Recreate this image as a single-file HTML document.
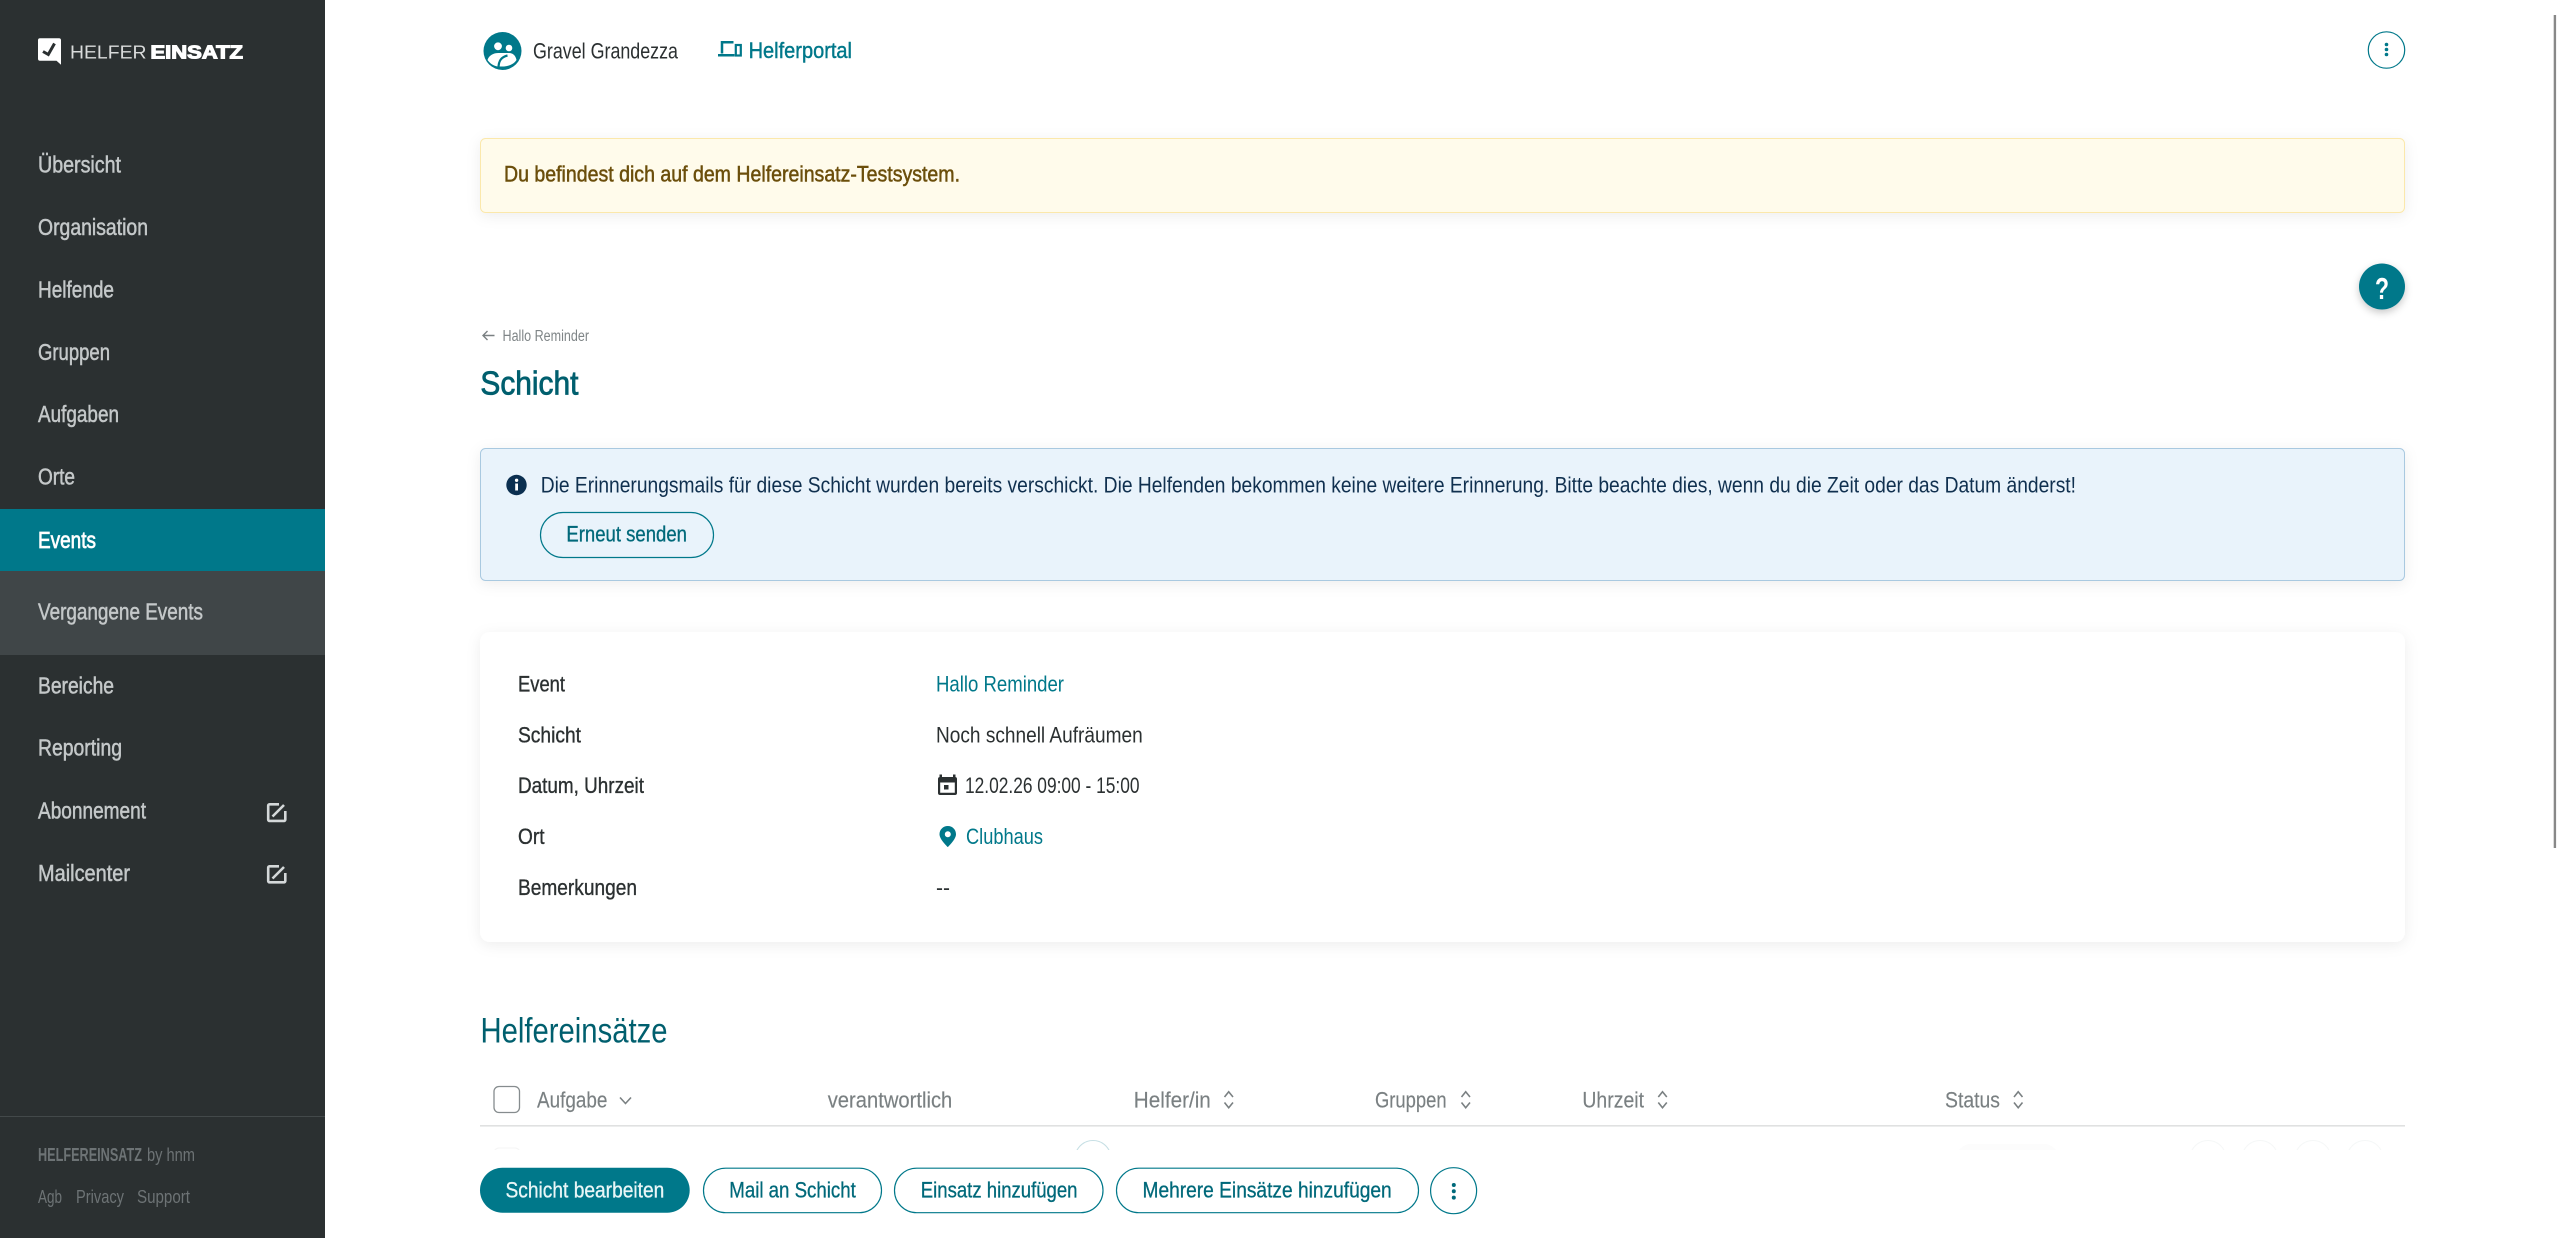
<!DOCTYPE html>
<html lang="de"><head><meta charset="utf-8"><title>Schicht</title>
<style>
html,body{margin:0;padding:0;background:#fff;width:2559px;height:1238px;overflow:hidden}
svg{display:block;position:absolute;left:0;top:0}
text{font-family:"Liberation Sans Narrow","Liberation Sans",sans-serif;font-size:22px;fill:#2b3031}
.n{font-size:23px;fill:#c4c8c9;stroke:#c4c8c9;stroke-width:.5px}
.t{fill:#00788a}
.h{fill:#7a8082;font-size:22px;stroke:#7a8082;stroke-width:.15px}
.b{fill:#00697a;font-size:22.5px;stroke:#00697a;stroke-width:.3px}
.f{fill:#6d7375;font-size:18.5px}
</style></head><body>
<svg width="2559" height="1238" viewBox="0 0 2559 1238" xmlns="http://www.w3.org/2000/svg">
<defs>
<filter id="s1" x="-5%" y="-30%" width="110%" height="170%"><feDropShadow dx="0" dy="3" stdDeviation="7" flood-color="#000" flood-opacity=".07"/></filter>
<filter id="s2" x="-30%" y="-30%" width="160%" height="170%"><feDropShadow dx="0" dy="3" stdDeviation="4" flood-color="#000" flood-opacity=".22"/></filter>
<clipPath id="fr"><rect x="480" y="1138" width="1925" height="12"/></clipPath>
</defs>

<!-- Sidebar -->
<rect x="0" y="0" width="325" height="1238" fill="#2b3031"/>
<rect x="0" y="509" width="325" height="62" fill="#00788a"/>
<rect x="0" y="571" width="325" height="84" fill="#404648"/>
<path d="M40 38.3H59a2 2 0 0 1 2 2V64.7L56.5 60.7H40a2 2 0 0 1-2-2V40.3a2 2 0 0 1 2-2Z" fill="#fff"/>
<path d="M43 51.5L48.3 54.5L54.5 43.5" fill="none" stroke="#2b3031" stroke-width="3"/>
<text x="70" y="58.3" textLength="76.5" lengthAdjust="spacingAndGlyphs" style="font-family:'Liberation Sans',sans-serif;font-size:18px;fill:#d9dbdb">HELFER</text>
<text x="150.5" y="58.3" textLength="92.5" lengthAdjust="spacingAndGlyphs" style="font-family:'Liberation Sans',sans-serif;font-size:18px;font-weight:700;fill:#fff;stroke:#fff;stroke-width:1.1px">EINSATZ</text>

<text class="n" x="38" y="172.7" textLength="83" lengthAdjust="spacingAndGlyphs">Übersicht</text>
<text class="n" x="38" y="235" textLength="110" lengthAdjust="spacingAndGlyphs">Organisation</text>
<text class="n" x="38" y="297.3" textLength="76" lengthAdjust="spacingAndGlyphs">Helfende</text>
<text class="n" x="38" y="360" textLength="72" lengthAdjust="spacingAndGlyphs">Gruppen</text>
<text class="n" x="38" y="422" textLength="81" lengthAdjust="spacingAndGlyphs">Aufgaben</text>
<text class="n" x="38" y="484.5" textLength="37" lengthAdjust="spacingAndGlyphs">Orte</text>
<text class="n" x="38" y="548" textLength="58" lengthAdjust="spacingAndGlyphs" style="fill:#fff;stroke:#fff;stroke-width:.7px">Events</text>
<text class="n" x="38" y="619.5" textLength="165" lengthAdjust="spacingAndGlyphs">Vergangene Events</text>
<text class="n" x="38" y="693.6" textLength="76" lengthAdjust="spacingAndGlyphs">Bereiche</text>
<text class="n" x="38" y="755.7" textLength="84" lengthAdjust="spacingAndGlyphs">Reporting</text>
<text class="n" x="38" y="818.3" textLength="108" lengthAdjust="spacingAndGlyphs">Abonnement</text>
<text class="n" x="38" y="880.8" textLength="92" lengthAdjust="spacingAndGlyphs">Mailcenter</text>
<g fill="none" stroke="#d4d8d9" stroke-width="2.6">
<path d="M279 804.3H269.5a1.3 1.3 0 0 0-1.3 1.3V819.6a1.3 1.3 0 0 0 1.3 1.3H284a1.3 1.3 0 0 0 1.3-1.3V811"/>
<path d="M272.5 816.5L284 805"/>
<path d="M279 866.3H269.5a1.3 1.3 0 0 0-1.3 1.3V881a1.3 1.3 0 0 0 1.3 1.3H284a1.3 1.3 0 0 0 1.3-1.3V873"/>
<path d="M272.5 878.5L284 867"/>
</g>
<rect x="0" y="1116" width="325" height="1" fill="#43494a"/>
<text class="f" x="38" y="1161.2" textLength="104" lengthAdjust="spacingAndGlyphs" style="font-weight:700">HELFEREINSATZ</text>
<text class="f" x="147" y="1161.2" textLength="48" lengthAdjust="spacingAndGlyphs">by hnm</text>
<text class="f" x="38" y="1203.2" textLength="24" lengthAdjust="spacingAndGlyphs">Agb</text>
<text class="f" x="76" y="1203.2" textLength="48" lengthAdjust="spacingAndGlyphs">Privacy</text>
<text class="f" x="137" y="1203.2" textLength="53" lengthAdjust="spacingAndGlyphs">Support</text>

<!-- Top bar -->
<circle cx="502.5" cy="51" r="19" fill="#00788a"/>
<circle cx="498" cy="46.3" r="3.9" fill="#fff"/>
<circle cx="509" cy="48" r="3.3" fill="#fff"/>
<path d="M487.5 60C489 55 494 52.8 499 53H509C513 53 515.5 55.5 516.5 60C514 64 509 66 504 66.5L498 66.5C493.5 66 490 63.5 487.5 60Z" fill="#fff"/>
<path d="M498.5 68C498.5 61 501 57 507.5 55.5" fill="none" stroke="#00788a" stroke-width="2.2"/>
<text x="533" y="58.3" textLength="145" lengthAdjust="spacingAndGlyphs" style="font-size:22.5px">Gravel Grandezza</text>
<path d="M722 53.5V42.2H733.5M718 55.2H734.5" fill="none" stroke="#00788a" stroke-width="2.5"/>
<rect x="735.8" y="45" width="5" height="10.5" fill="none" stroke="#00788a" stroke-width="2.2"/>
<text class="t" x="748.6" y="58" textLength="103.4" lengthAdjust="spacingAndGlyphs" style="font-size:22.5px;stroke:#00788a;stroke-width:.4px">Helferportal</text>
<circle cx="2386.5" cy="50" r="18.2" fill="#fff" stroke="#00788a" stroke-width="1.2"/>
<g fill="#00788a"><circle cx="2386.5" cy="44.5" r="1.8"/><circle cx="2386.5" cy="49.5" r="1.8"/><circle cx="2386.5" cy="54.5" r="1.8"/></g>

<!-- Warning -->
<rect x="480.5" y="138.5" width="1924" height="74" rx="5" fill="#fffbeb" stroke="#fbe8ab" filter="url(#s1)"/>
<text x="504" y="181.7" textLength="456" lengthAdjust="spacingAndGlyphs" style="font-size:22.5px;fill:#6b4e0b;stroke:#6b4e0b;stroke-width:.5px">Du befindest dich auf dem Helfereinsatz-Testsystem.</text>

<!-- Help -->
<circle cx="2382" cy="286.5" r="23" fill="#00788a" filter="url(#s2)"/>
<text x="2375" y="299" textLength="14" lengthAdjust="spacingAndGlyphs" style="font-family:'Liberation Sans',sans-serif;font-size:31px;font-weight:700;fill:#fff">?</text>

<!-- Breadcrumb -->
<path d="M494.5 335.5H483M487.5 331L483 335.5L487.5 340" fill="none" stroke="#7a8082" stroke-width="1.4"/>
<text x="502.5" y="341" textLength="86.5" lengthAdjust="spacingAndGlyphs" style="font-size:15.5px;fill:#7f8587">Hallo Reminder</text>
<text x="480.4" y="394.3" textLength="98" lengthAdjust="spacingAndGlyphs" style="font-size:33.5px;fill:#005f6e;stroke:#005f6e;stroke-width:.8px">Schicht</text>

<!-- Info -->
<rect x="480.5" y="448.5" width="1924" height="132" rx="5" fill="#e9f3fb" stroke="#a9c9e0" filter="url(#s1)"/>
<circle cx="516.5" cy="485" r="10.2" fill="#0b2f50"/>
<rect x="515.2" y="483.5" width="2.8" height="7" fill="#fff"/>
<circle cx="516.6" cy="480.3" r="1.7" fill="#fff"/>
<text x="540.7" y="492.7" textLength="1535.3" lengthAdjust="spacingAndGlyphs" style="font-size:22.5px;fill:#10304f">Die Erinnerungsmails für diese Schicht wurden bereits verschickt. Die Helfenden bekommen keine weitere Erinnerung. Bitte beachte dies, wenn du die Zeit oder das Datum änderst!</text>
<rect x="540.5" y="512.5" width="173" height="45" rx="22.5" fill="none" stroke="#00788a" stroke-width="1.2"/>
<text class="b" x="566.4" y="541.7" textLength="120.6" lengthAdjust="spacingAndGlyphs">Erneut senden</text>

<!-- Card -->
<rect x="480" y="632" width="1925" height="310" rx="10" fill="#fff" filter="url(#s1)"/>
<text x="518" y="691.7" textLength="47" lengthAdjust="spacingAndGlyphs" style="stroke:#2b3031;stroke-width:.35px">Event</text>
<text x="518" y="742.7" textLength="63" lengthAdjust="spacingAndGlyphs" style="stroke:#2b3031;stroke-width:.35px">Schicht</text>
<text x="518" y="793" textLength="126" lengthAdjust="spacingAndGlyphs" style="stroke:#2b3031;stroke-width:.35px">Datum, Uhrzeit</text>
<text x="518" y="844" textLength="26.5" lengthAdjust="spacingAndGlyphs" style="stroke:#2b3031;stroke-width:.35px">Ort</text>
<text x="518" y="895" textLength="119" lengthAdjust="spacingAndGlyphs" style="stroke:#2b3031;stroke-width:.35px">Bemerkungen</text>
<text class="t" x="936" y="691.7" textLength="128" lengthAdjust="spacingAndGlyphs">Hallo Reminder</text>
<text x="936" y="742.7" textLength="206.7" lengthAdjust="spacingAndGlyphs">Noch schnell Aufräumen</text>
<path d="M942 774.5V777H953V774.5H955.5V777H955A2 2 0 0 1 957 779V793A2 2 0 0 1 955 795H940A2 2 0 0 1 938 793V779A2 2 0 0 1 940 777H939.5V774.5ZM940.2 782.5V792.8H954.8V782.5Z" fill="#2b3031" fill-rule="evenodd"/>
<rect x="944" y="785" width="4.5" height="4.5" fill="#2b3031"/>
<text x="965" y="793" textLength="174.5" lengthAdjust="spacingAndGlyphs">12.02.26 09:00 - 15:00</text>
<path d="M947.8 826C943 826 939.5 829.8 939.5 834.2C939.5 839.5 947.8 847 947.8 847C947.8 847 956 839.5 956 834.2C956 829.8 952.6 826 947.8 826ZM947.8 837.2A3 3 0 1 1 947.8 831.2A3 3 0 1 1 947.8 837.2Z" fill="#00788a" fill-rule="evenodd"/>
<text class="t" x="966" y="844" textLength="77" lengthAdjust="spacingAndGlyphs">Clubhaus</text>
<text x="936" y="895" textLength="14" lengthAdjust="spacingAndGlyphs">--</text>

<!-- Section -->
<text x="480.5" y="1042.7" textLength="187" lengthAdjust="spacingAndGlyphs" style="font-size:35.5px;fill:#005f6e">Helfereinsätze</text>

<!-- Table head -->
<rect x="494" y="1086.5" width="25.5" height="26" rx="5" fill="#fff" stroke="#868c8e" stroke-width="1.3"/>
<text class="h" x="537" y="1107.7" textLength="70.4" lengthAdjust="spacingAndGlyphs">Aufgabe</text>
<path d="M620 1097.5L625.5 1103.5L631 1097.5" fill="none" stroke="#7a8082" stroke-width="1.6"/>
<text class="h" x="827.7" y="1107.7" textLength="124.6" lengthAdjust="spacingAndGlyphs">verantwortlich</text>
<text class="h" x="1133.8" y="1107.7" textLength="77" lengthAdjust="spacingAndGlyphs">Helfer/in</text>
<text class="h" x="1375" y="1107.7" textLength="71.6" lengthAdjust="spacingAndGlyphs">Gruppen</text>
<text class="h" x="1582.4" y="1107.7" textLength="61.6" lengthAdjust="spacingAndGlyphs">Uhrzeit</text>
<text class="h" x="1945" y="1107.7" textLength="55" lengthAdjust="spacingAndGlyphs">Status</text>
<g fill="none" stroke="#7a8082" stroke-width="1.6">
<path d="M1224.5 1097L1228.7 1091.8L1233 1097M1224.5 1102.5L1228.7 1107.7L1233 1102.5"/>
<path d="M1461.5 1097L1465.7 1091.8L1470 1097M1461.5 1102.5L1465.7 1107.7L1470 1102.5"/>
<path d="M1658.3 1097L1662.5 1091.8L1666.8 1097M1658.3 1102.5L1662.5 1107.7L1666.8 1102.5"/>
<path d="M2014 1097L2018.2 1091.8L2022.5 1097M2014 1102.5L2018.2 1107.7L2022.5 1102.5"/>
</g>
<rect x="480" y="1125" width="1925" height="1.6" fill="#e0e1e1"/>

<!-- Faded row -->
<g clip-path="url(#fr)" fill="none">
<circle cx="1093" cy="1158.5" r="18" stroke="#c6dfe4" stroke-width="1.1"/>
<rect x="494" y="1148" width="26" height="26" rx="5" stroke="#f5f5f5"/>
<rect x="1956" y="1144" width="103" height="30" rx="15" fill="#fcfcfc"/>
<circle cx="2208" cy="1158.5" r="18" stroke="#f5f7f7"/>
<circle cx="2260" cy="1158.5" r="18" stroke="#f5f7f7"/>
<circle cx="2313" cy="1158.5" r="18" stroke="#f5f7f7"/>
<circle cx="2365" cy="1158.5" r="18" stroke="#f5f7f7"/>
</g>

<!-- Action bar -->
<rect x="480" y="1167.7" width="209.7" height="45" rx="22.5" fill="#00788a"/>
<text x="505.5" y="1197.3" textLength="158.8" lengthAdjust="spacingAndGlyphs" style="font-size:22.5px;fill:#e9f6f7;stroke:#e9f6f7;stroke-width:.3px">Schicht bearbeiten</text>
<g fill="#fff" stroke="#00788a" stroke-width="1.2">
<rect x="703.5" y="1168.2" width="178" height="44.5" rx="22.2"/>
<rect x="894.5" y="1168.2" width="208.5" height="44.5" rx="22.2"/>
<rect x="1116.5" y="1168.2" width="302" height="44.5" rx="22.2"/>
<circle cx="1453.6" cy="1190.7" r="23"/>
</g>
<text class="b" x="729.3" y="1197.3" textLength="126.5" lengthAdjust="spacingAndGlyphs">Mail an Schicht</text>
<text class="b" x="920.8" y="1197.3" textLength="156.7" lengthAdjust="spacingAndGlyphs">Einsatz hinzufügen</text>
<text class="b" x="1142.5" y="1197.3" textLength="249.2" lengthAdjust="spacingAndGlyphs">Mehrere Einsätze hinzufügen</text>
<g fill="#00697a"><circle cx="1453.8" cy="1185" r="2"/><circle cx="1453.8" cy="1191.3" r="2"/><circle cx="1453.8" cy="1197.6" r="2"/></g>

<!-- Scrollbar -->
<rect x="2553.7" y="15" width="2.4" height="833" fill="#888"/>
</svg>
</body></html>
